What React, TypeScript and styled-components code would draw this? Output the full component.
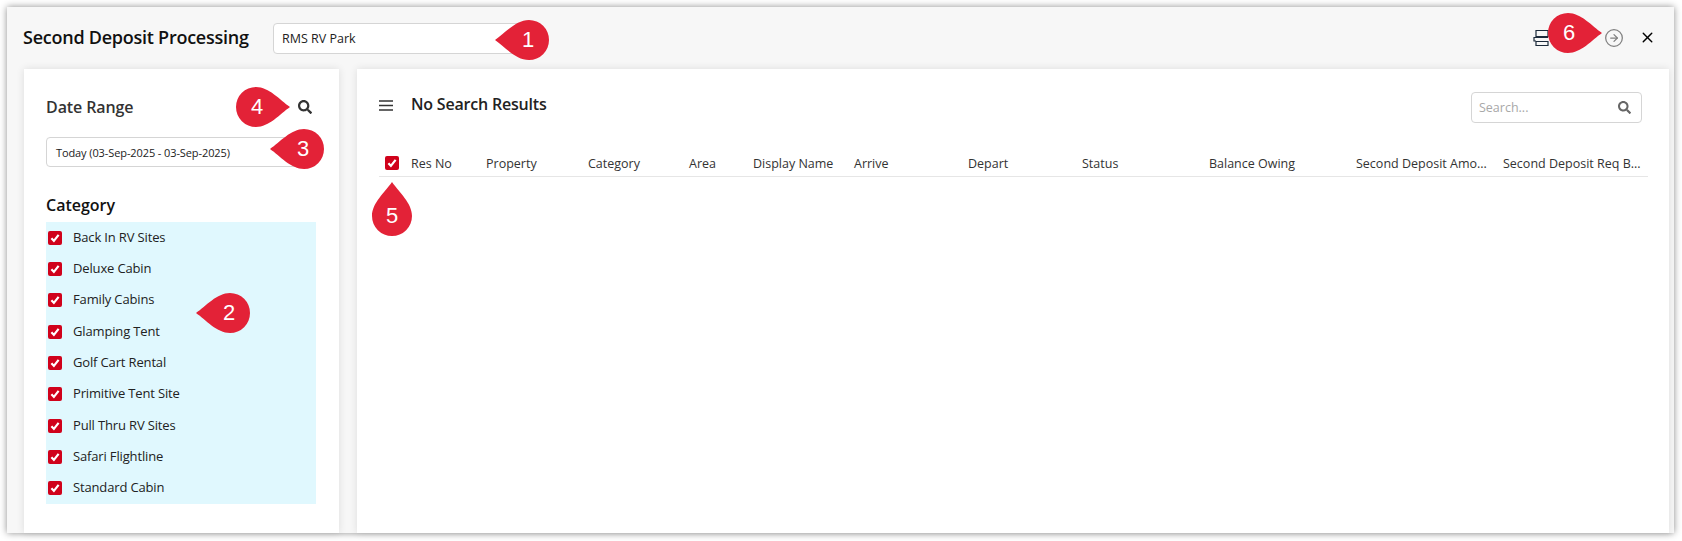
import React from "react";
import styled, { createGlobalStyle } from "styled-components";
import { FaSearch } from "react-icons/fa";
import { X, CircleArrowRight } from "lucide-react";

const Global = createGlobalStyle`
  html, body { margin: 0; padding: 0; background: #fff; overflow: hidden; }
  * { box-sizing: border-box; }
`;

const Page = styled.div`
  position: relative;
  width: 1682px;
  height: 541px;
  padding: 7px 8px 8px 7px;
  font-family: "Open Sans", "Liberation Sans", sans-serif;
  color: #222;
`;

const Modal = styled.div`
  height: 526px;
  background: #f7f7f7;
  box-shadow: 0 0 7px rgba(0, 0, 0, 0.45);
  display: flex;
  flex-direction: column;
`;

const Header = styled.header`
  height: 62px;
  padding: 0 18px 0 16px;
  display: flex;
  align-items: center;
`;

const Title = styled.h1`
  width: 250px;
  margin: -2px 0 0;
  font-size: 18px;
  line-height: 24px;
  font-weight: 600;
  letter-spacing: -0.25px;
  color: #111;
  white-space: nowrap;
`;

const Select = styled.div`
  width: 250px;
  height: 31px;
  margin-top: 1px;
  padding-left: 8px;
  display: flex;
  align-items: center;
  background: #fff;
  border: 1px solid #d5d5d5;
  border-radius: 4px;
  font-size: 12.5px;
`;

const HeaderIcons = styled.div`
  margin-left: auto;
  display: flex;
  align-items: center;
  margin-top: -1px;
`;

const PrintIcon = styled.svg`
  width: 18px;
  height: 18px;
  margin-right: 53px;
  flex: none;
`;

const NextIcon = styled(CircleArrowRight)`
  width: 20px;
  height: 20px;
  margin-right: 15px;
  color: #808080;
`;

const CloseIcon = styled(X)`
  width: 17px;
  height: 17px;
  color: #000;
`;

const Content = styled.div`
  flex: 1;
  min-height: 0;
  padding: 0 5px 0 17px;
  display: flex;
  gap: 18px;
`;

const Panel = styled.section`
  background: #fff;
  box-shadow: 0 0 8px rgba(0, 0, 0, 0.11);
`;

const Sidebar = styled(Panel)`
  width: 315px;
  flex: none;
  padding: 23px 23px 0 22px;
`;

const DateHead = styled.div`
  height: 30px;
  padding-right: 4px;
  display: flex;
  align-items: center;
  justify-content: space-between;
`;

const DateLabel = styled.h2`
  margin: 0;
  font-size: 16px;
  font-weight: 600;
  letter-spacing: -0.1px;
  color: #333;
`;

const SearchGlyph = styled(FaSearch)`
  font-size: 14px;
  color: #333;
`;

const DateInput = styled.div`
  height: 30px;
  margin-top: 15px;
  padding-left: 9px;
  display: flex;
  align-items: center;
  background: #fff;
  border: 1px solid #d5d5d5;
  border-radius: 4px;
  font-size: 11px;
  letter-spacing: -0.1px;
  color: #222;
`;

const CategoryTitle = styled.h2`
  margin: 26px 0 5px;
  font-size: 16px;
  line-height: 24px;
  font-weight: 600;
  color: #111;
`;

const CategoryList = styled.ul`
  margin: 0;
  padding: 0 0 0 2px;
  height: 282px;
  list-style: none;
  background: #e0f8fe;
  display: grid;
  grid-template-rows: repeat(9, 1fr);
`;

const CategoryRow = styled.li`
  display: flex;
  align-items: center;
  gap: 11px;
`;

const CategoryLabel = styled.span`
  margin-top: -2px;
  font-size: 13px;
  letter-spacing: -0.15px;
  color: #222;
`;

const Box = styled.span`
  width: 14px;
  height: 14px;
  flex: none;
  display: flex;
  align-items: center;
  justify-content: center;
  background: #d0021b;
  border-radius: 2px;
`;

const Main = styled(Panel)`
  flex: 1;
  min-width: 0;
  padding: 23px 21px 0 22px;
`;

const Toolbar = styled.div`
  height: 31px;
  padding-right: 6px;
  display: flex;
  align-items: flex-start;
`;

const MenuIcon = styled.svg`
  width: 14px;
  height: 13px;
  margin: 7px 18px 0 0;
  flex: none;
`;

const ResultsTitle = styled.h2`
  margin: 0;
  font-size: 16px;
  line-height: 24px;
  font-weight: 600;
  letter-spacing: -0.2px;
  color: #222;
`;

const SearchBox = styled.div`
  width: 171px;
  height: 31px;
  margin-left: auto;
  padding: 0 10px 0 7px;
  display: flex;
  align-items: center;
  justify-content: space-between;
  border: 1px solid #d5d5d5;
  border-radius: 4px;
  font-size: 12.5px;
  color: #a8a8a8;
`;

const SearchBoxIcon = styled(FaSearch)`
  font-size: 13px;
  color: #666;
`;

const TableHead = styled.div`
  height: 25px;
  margin-top: 29px;
  padding-bottom: 2px;
  display: grid;
  grid-template-columns: 32px 75px 102px 101px 64px 101px 114px 114px 127px 147px 147px 143px;
  align-items: center;
  border-bottom: 1px solid #e6e6e6;
`;

const HeadCell = styled.div`
  font-size: 12.5px;
  font-weight: 500;
  color: #333;
  white-space: nowrap;
`;

const BoxCell = styled.div`
  padding-left: 6px;
`;

const PinWrap = styled.div<{ $x: number; $y: number; $w: number; $h: number }>`
  position: absolute;
  left: ${(p) => p.$x}px;
  top: ${(p) => p.$y}px;
  width: ${(p) => p.$w}px;
  height: ${(p) => p.$h}px;
`;

const PinShape = styled.svg`
  display: block;
  width: 100%;
  height: 100%;
`;

const PinNumber = styled.span<{ $dir: Dir }>`
  position: absolute;
  width: 40px;
  height: 40px;
  top: ${(p) => (p.$dir === "up" ? 14 : 0)}px;
  left: ${(p) => (p.$dir === "left" ? 13 : p.$dir === "right" ? 1 : 0)}px;
  display: flex;
  align-items: center;
  justify-content: center;
  font-family: "Liberation Sans", Arial, sans-serif;
  font-size: 22px;
  color: #fff;
`;

type Dir = "left" | "right" | "up";

const pinPaths: Record<Dir, { w: number; h: number; d: string }> = {
  left: { w: 54, h: 40, d: "M0 20C10 13 21 0 34 0A20 20 0 0 1 34 40C21 40 10 27 0 20Z" },
  right: { w: 54, h: 40, d: "M54 20C44 13 33 0 20 0A20 20 0 0 0 20 40C33 40 44 27 54 20Z" },
  up: { w: 40, h: 54, d: "M20 0C13 10 0 21 0 34A20 20 0 0 0 40 34C40 21 27 10 20 0Z" },
};

function Pin({ n, x, y, dir }: { n: number; x: number; y: number; dir: Dir }) {
  const s = pinPaths[dir];
  return (
    <PinWrap $x={x} $y={y} $w={s.w} $h={s.h}>
      <PinShape viewBox={`0 0 ${s.w} ${s.h}`}>
        <path d={s.d} fill="#e32237" />
      </PinShape>
      <PinNumber $dir={dir}>{n}</PinNumber>
    </PinWrap>
  );
}

function Check() {
  return (
    <Box>
      <svg width="10" height="10" viewBox="0 0 10 10">
        <path d="M1.4 5.2 3.9 7.9 8.6 1.9" fill="none" stroke="#fff" strokeWidth="2.2" />
      </svg>
    </Box>
  );
}

const categories = [
  "Back In RV Sites",
  "Deluxe Cabin",
  "Family Cabins",
  "Glamping Tent",
  "Golf Cart Rental",
  "Primitive Tent Site",
  "Pull Thru RV Sites",
  "Safari Flightline",
  "Standard Cabin",
];

const columns = [
  "Res No",
  "Property",
  "Category",
  "Area",
  "Display Name",
  "Arrive",
  "Depart",
  "Status",
  "Balance Owing",
  "Second Deposit Amo...",
  "Second Deposit Req B...",
];

export default function App() {
  return (
    <Page>
      <Global />
      <Modal>
        <Header>
          <Title>Second Deposit Processing</Title>
          <Select>RMS RV Park</Select>
          <HeaderIcons>
            <PrintIcon viewBox="0 0 18 18">
              <path
                d="M3 7.5V1.5h12v6zM3 12.5v4h12v-4zM3 8.5H1v3.5h2M3 8.5h12"
                fill="none"
                stroke="#1c2a3a"
                strokeWidth="1.2"
              />
            </PrintIcon>
            <NextIcon strokeWidth={1.5} />
            <CloseIcon strokeWidth={2} />
          </HeaderIcons>
        </Header>
        <Content>
          <Sidebar>
            <DateHead>
              <DateLabel>Date Range</DateLabel>
              <SearchGlyph />
            </DateHead>
            <DateInput>Today (03-Sep-2025 - 03-Sep-2025)</DateInput>
            <CategoryTitle>Category</CategoryTitle>
            <CategoryList>
              {categories.map((c) => (
                <CategoryRow key={c}>
                  <Check />
                  <CategoryLabel>{c}</CategoryLabel>
                </CategoryRow>
              ))}
            </CategoryList>
          </Sidebar>
          <Main>
            <Toolbar>
              <MenuIcon viewBox="0 0 14 13">
                <path d="M0 2h14M0 6.5h14M0 11h14" stroke="#333" strokeWidth="1.7" />
              </MenuIcon>
              <ResultsTitle>No Search Results</ResultsTitle>
              <SearchBox>
                Search...
                <SearchBoxIcon />
              </SearchBox>
            </Toolbar>
            <TableHead>
              <BoxCell>
                <Check />
              </BoxCell>
              {columns.map((c) => (
                <HeadCell key={c}>{c}</HeadCell>
              ))}
            </TableHead>
          </Main>
        </Content>
      </Modal>
      <Pin n={1} x={495} y={20} dir="left" />
      <Pin n={2} x={196} y={293} dir="left" />
      <Pin n={3} x={270} y={129} dir="left" />
      <Pin n={4} x={236} y={87} dir="right" />
      <Pin n={5} x={372} y={182} dir="up" />
      <Pin n={6} x={1548} y={13} dir="right" />
    </Page>
  );
}
